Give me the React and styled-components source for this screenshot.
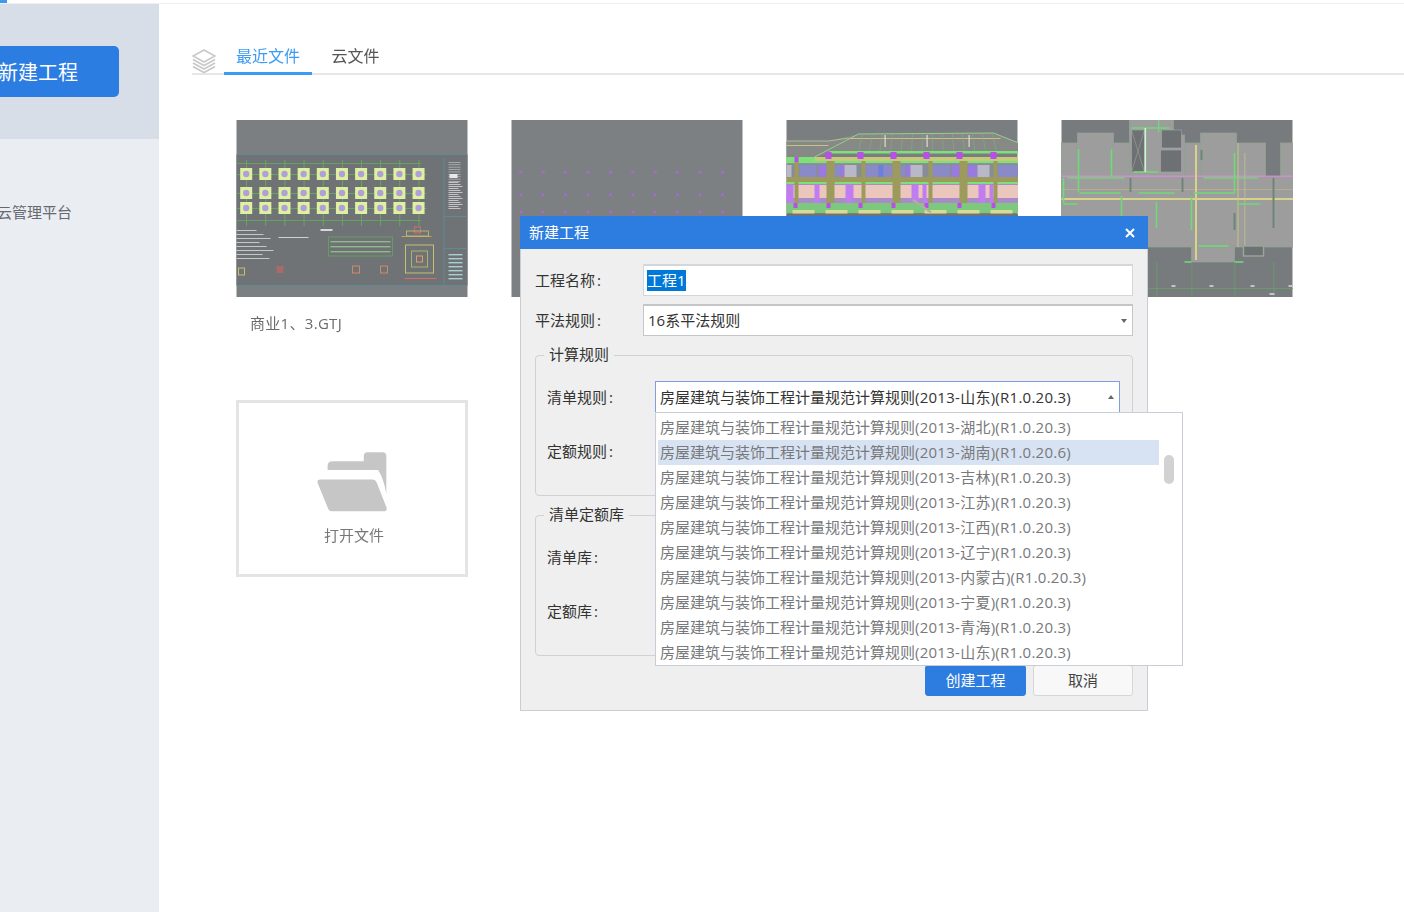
import styled, { createGlobalStyle } from "styled-components";

const FONT = `"Open Sans", "Noto Sans CJK SC", sans-serif`;

const GlobalStyle = createGlobalStyle`
    html, body {
        margin: 0;
        padding: 0;
        height: 100%;
        overflow: hidden;
        background: #ffffff;
        font-family: ${FONT};
    }
    * { box-sizing: border-box; }
`;

const Page = styled.div`
    position: relative;
    width: 1404px;
    height: 912px;
    display: flex;
    flex-direction: column;
    overflow: hidden;
    filter: blur(0.3px);
`;

const TopStrip = styled.div`
    height: 4px;
    flex: none;
    background: #ffffff;
    border-bottom: 1px solid #efefef;
    &::before {
        content: "";
        display: block;
        width: 7px;
        height: 3px;
        background: #3f97f0;
    }
`;

const Body = styled.div`
    flex: 1;
    display: flex;
    min-height: 0;
`;

const Sidebar = styled.aside`
    width: 159px;
    flex: none;
    background: #eaedf2;
    overflow: hidden;
`;

const SideHead = styled.div`
    height: 135px;
    background: #d8dee8;
    padding-top: 42px;
`;

const NewButton = styled.div`
    width: 159px;
    height: 51px;
    margin-left: -40px;
    padding-left: 38px;
    display: flex;
    align-items: center;
    background: #2b7de1;
    border-radius: 5px;
    color: #ffffff;
    font-size: 20px;
`;

const SideLink = styled.div`
    margin: 64px 0 0 -3px;
    font-size: 15px;
    line-height: 18px;
    color: #666a70;
`;

const Main = styled.main`
    flex: 1;
    padding: 40px 0 0 33px;
`;

const TabBar = styled.div`
    display: flex;
    align-items: flex-end;
    height: 31px;
    border-bottom: 2px solid #e6e6e6;
`;

const LayersIcon = styled.svg`
    width: 24px;
    height: 26px;
    margin-bottom: -1px;
    margin-right: 8px;
    flex: none;
`;

const Tab = styled.div`
    width: ${props => props.$width};
    height: 31px;
    margin-bottom: -2px;
    text-align: center;
    font-size: 16px;
    line-height: 24px;
    color: ${props => props.$active ? "#3b9bf5" : "#555555"};
    border-bottom: 3px solid ${props => props.$active ? "#3b9bf5" : "transparent"};
`;

const FileGrid = styled.div`
    display: grid;
    grid-template-columns: repeat(4, 231px);
    column-gap: 44px;
    padding: 45px 0 0 44px;
`;

const FileCard = styled.div`
    height: 280px;
`;

const Thumb = styled.svg`
    display: block;
    width: 232px;
    height: 177px;
`;

const Caption = styled.div`
    margin: 16px 0 0 14px;
    font-size: 15px;
    line-height: 20px;
    letter-spacing: 0.3px;
    color: #6b6b6b;
`;

const OpenCard = styled.div`
    width: 232px;
    height: 177px;
    border: 3px solid #e4e4e4;
    display: flex;
    flex-direction: column;
    align-items: center;
    padding: 47px 0 0 4px;
    font-size: 15px;
    line-height: 20px;
    color: #777777;
`;

const FolderIcon = styled.svg`
    width: 73px;
    height: 63px;
    margin: 0 4px 12px 0;
`;

const Dialog = styled.section`
    position: absolute;
    left: 520px;
    top: 216px;
    width: 628px;
    height: 495px;
    background: #efefef;
    border: 1px solid #c9ced6;
    border-top: none;
    color: #333333;
    font-size: 15px;
`;

const DialogHead = styled.header`
    height: 33px;
    margin: 0 -1px;
    padding: 0 13px 0 9px;
    display: flex;
    align-items: center;
    justify-content: space-between;
    background: #2d7de0;
    color: #ffffff;
    font-size: 15px;
`;

const DialogTitle = styled.span`
    padding-bottom: 2px;
`;

const CloseIcon = styled.svg`
    width: 10px;
    height: 10px;
`;

const DialogBody = styled.div`
    padding: 15px 14px 0;
`;

const Row = styled.div`
    display: flex;
    align-items: center;
    height: 32px;
    margin-bottom: ${props => props.$gap || "8px"};
`;

const Label = styled.label`
    width: 108px;
    flex: none;
    padding-bottom: 2px;
`;

const Colon = styled.span`
    margin-left: 2px;
`;

const TextField = styled.div`
    flex: 1;
    height: 32px;
    padding: 0 0 1px 3px;
    display: flex;
    align-items: center;
    background: #ffffff;
    border: 1px solid #d4d6d9;
    border-top-width: 2px;
`;

const Selected = styled.span`
    background: #0078d7;
    color: #ffffff;
    line-height: 21px;
`;

const Combo = styled.div`
    position: relative;
    flex: 1;
    height: 32px;
    padding: 0 5px 2px 4px;
    display: flex;
    align-items: center;
    justify-content: space-between;
    background: #ffffff;
    white-space: nowrap;
    border: 1px solid ${props => props.$open ? "#7f9fe0" : "#c4c6c9"};
    border-top-width: ${props => props.$open ? "1px" : "2px"};
`;

const Caret = styled.span`
    flex: none;
    width: 0;
    height: 0;
    margin-top: 2px;
    border-left: 3.5px solid transparent;
    border-right: 3.5px solid transparent;
    border-top: ${props => props.$up ? "0" : "4px solid #666666"};
    border-bottom: ${props => props.$up ? "4px solid #666666" : "0"};
`;

const Version = styled.span`
    letter-spacing: 0.26px;
`;

const Group = styled.div`
    position: relative;
    height: 141px;
    margin-top: ${props => props.$top};
    padding: 25px 12px 0 11px;
    border: 1px solid #cfd1d4;
    border-radius: 4px;
`;

const GroupTitle = styled.div`
    position: absolute;
    left: 8px;
    top: -12px;
    padding: 0 5px;
    background: #efefef;
    line-height: 20px;
`;

const Dropdown = styled.ul`
    position: absolute;
    left: -1px;
    top: 30px;
    z-index: 2;
    width: 528px;
    height: 254px;
    margin: 0;
    padding: 2px 0 0 2px;
    list-style: none;
    background: #ffffff;
    border: 1px solid #c9ced6;
    color: #77797c;
`;

const Option = styled.li`
    width: 501px;
    height: 25px;
    padding-left: 2px;
    line-height: 25px;
    background: ${props => props.$active ? "#d7e2f2" : "transparent"};
`;

const ScrollThumb = styled.div`
    position: absolute;
    left: 508px;
    top: 42px;
    width: 10px;
    height: 29px;
    border-radius: 5px;
    background: #d2d2d2;
`;

const Actions = styled.div`
    display: flex;
    justify-content: flex-end;
    gap: 7px;
    margin-top: 9px;
`;

const ActionButton = styled.button`
    width: ${props => props.$primary ? "101px" : "100px"};
    height: 31px;
    padding: 0 0 2px;
    font: inherit;
    border-radius: 3px;
    color: ${props => props.$primary ? "#ffffff" : "#444444"};
    background: ${props => props.$primary ? "#2d7de0" : "#f8f8f8"};
    border: 1px solid ${props => props.$primary ? "#2d7de0" : "#d4d6d9"};
`;

const PREFIX = "房屋建筑与装饰工程计量规范计算规则";

const OPTIONS = [
    "(2013-湖北)(R1.0.20.3)",
    "(2013-湖南)(R1.0.20.6)",
    "(2013-吉林)(R1.0.20.3)",
    "(2013-江苏)(R1.0.20.3)",
    "(2013-江西)(R1.0.20.3)",
    "(2013-辽宁)(R1.0.20.3)",
    "(2013-内蒙古)(R1.0.20.3)",
    "(2013-宁夏)(R1.0.20.3)",
    "(2013-青海)(R1.0.20.3)",
    "(2013-山东)(R1.0.20.3)",
];

const range = (n) => Array.from({ length: n }, (_, i) => i);

function PlanThumb() {
    const cols = range(10).map((i) => 9.7 + i * 19.15);
    const rows = [54, 73, 88];
    return (
        <Thumb viewBox="0 0 231 177">
            <rect width="231" height="177" fill="#7b7f82" />
            <rect x="0" y="35" width="231" height="130" fill="#6f7376" />
            <rect x="0" y="34" width="231" height="1" fill="#5f8c94" />
            <rect x="0" y="165" width="231" height="1" fill="#5f8c94" />
            <rect x="207" y="38" width="1" height="127" fill="#5f8c94" />
            <rect x="0" y="43" width="185" height="1" fill="#62a35e" />
            <rect x="0" y="100" width="185" height="1" fill="#62a35e" />
            {cols.map((x) => <rect key={x} x={x} y="40" width="0.8" height="66" fill="#66b060" />)}
            {rows.map((y) => <rect key={y} x="0" y={y} width="190" height="0.8" fill="#66b060" />)}
            {rows.map((y) => cols.map((x) => (
                <g key={`${x}-${y}`}>
                    <rect x={x - 6} y={y - 6} width="12" height="12" fill="#dff0a0" />
                    <circle cx={x} cy={y} r="3.2" fill="#b0a0d8" />
                </g>
            )))}
            {range(9).map((i) => <rect key={i} x="212" y={42 + i * 2.4} width="12" height="0.7" fill="#b9bdbf" />)}
            <rect x="213" y="54" width="8" height="4" fill="#e8e8e8" />
            {range(14).map((i) => <rect key={i} x="212" y={62 + i * 2} width={10 + (i % 3) * 2} height="0.8" fill="#d8d8d8" />)}
            <rect x="208" y="96" width="23" height="1" fill="#5f8c94" />
            <rect x="208" y="128" width="23" height="1" fill="#5f8c94" />
            {range(7).map((i) => <rect key={i} x="212" y={134 + i * 4} width="14" height="1.4" fill="#a9cfd0" />)}
            {range(8).map((i) => <rect key={i} x="0" y={110 + i * 4} width={20 + (i * 7) % 18} height="0.9" fill="#cfd2d3" />)}
            <rect x="42" y="117" width="30" height="1" fill="#cfd2d3" />
            <rect x="84" y="109" width="12" height="2" fill="#d8d8d8" />
            <rect x="92" y="117" width="64" height="19" fill="none" stroke="#67a660" strokeWidth="0.8" />
            {range(3).map((i) => <rect key={i} x="94" y={121 + i * 5} width="60" height="1.4" fill="#8fb98b" />)}
            <rect x="165" y="116" width="30" height="1" fill="#c8a05a" />
            <rect x="178" y="107" width="6" height="6" fill="none" stroke="#d66b6b" strokeWidth="1" />
            <rect x="170" y="111" width="22" height="5" fill="none" stroke="#c8c070" strokeWidth="0.8" />
            <rect x="169" y="125" width="28" height="28" fill="none" stroke="#c8c070" strokeWidth="1" />
            <rect x="175" y="131" width="16" height="16" fill="none" stroke="#a9b56a" strokeWidth="1" />
            <rect x="180" y="136" width="6" height="6" fill="none" stroke="#e29a6b" strokeWidth="1" />
            <rect x="40" y="146" width="7" height="7" fill="#a86a6a" />
            <rect x="116" y="146" width="7" height="7" fill="none" stroke="#d08a6a" strokeWidth="1" />
            <rect x="144" y="146" width="7" height="7" fill="none" stroke="#d08a6a" strokeWidth="1" />
            <rect x="2" y="148" width="6" height="7" fill="none" stroke="#c8c070" strokeWidth="1" />
            <rect x="168" y="158" width="32" height="1" fill="#d66b6b" />
        </Thumb>
    );
}

function DotsThumb() {
    return (
        <Thumb viewBox="0 0 231 177">
            <rect width="231" height="177" fill="#7c8083" />
            {[52.3, 74.7, 92].map((y) => range(11).map((i) => (
                <circle key={`${y}-${i}`} cx={9.3 + i * 22.4} cy={y} r="1.5" fill="#a868d8" />
            )))}
        </Thumb>
    );
}

const UPPER_WINDOWS = [
    [0, 5, "#b8b8c8"], [13, 17, "#8a8ac8"], [32, 8, "#9a7ae0"], [48, 6, "#8a8ac8"], [54, 4, "#9a7ae0"],
    [58, 12, "#b8b8c8"], [78, 14, "#8a8ac8"], [92, 5, "#6a7fe0"], [97, 9, "#8a8ac8"], [113, 6, "#8a8ac8"],
    [120, 4, "#9a7ae0"], [124, 12, "#b8b8c8"], [145, 18, "#8a8ac8"], [165, 8, "#9a7ae0"], [181, 10, "#9a7ae0"],
    [191, 12, "#b8b8c8"], [211, 21, "#8a8ac8"],
];

const LOWER_STRIPS = [[0, 7], [28, 5], [59, 8], [125, 7], [136, 4], [192, 7], [203, 4]];

const WIDE_COLUMNS = [40, 106, 173];
const THIN_COLUMNS = [8, 75, 142, 207];

function BuildingThumb() {
    return (
        <Thumb viewBox="0 0 231 177">
            <rect width="231" height="177" fill="#7a7e81" />
            <path d="M0 21 H42 L72 14 L207 13 L232 23 V33 H43 L28 38 H0Z" fill="#868985" />
            <path d="M28 37 L72 14 L207 13 L232 23" fill="none" stroke="#93d090" strokeWidth="1" />
            <path d="M0 21 H42 L62 18" fill="none" stroke="#b8d090" strokeWidth="0.8" />
            <rect x="62" y="18" width="152" height="1" fill="#c8c088" />
            <rect x="0" y="25" width="42" height="1" fill="#c8c088" />
            {[98, 140, 182].map((x) => <rect key={x} x={x} y="15" width="1.2" height="12" fill="#dcdcdc" />)}
            {range(14).map((i) => <path key={i} d={`M${76 + i * 10} 14 L${72 + i * 10.6} 32`} stroke="#7fb07f" strokeWidth="0.6" />)}
            <rect x="43" y="31" width="189" height="2.5" fill="#7de07a" />
            <rect x="0" y="37" width="232" height="4" fill="#c8c87a" />
            <rect x="0" y="37" width="28" height="4" fill="#7de07a" />
            <rect x="0" y="41" width="232" height="2.5" fill="#7de07a" />
            <rect x="0" y="43.5" width="232" height="14" fill="#888c94" />
            {UPPER_WINDOWS.map(([x, w, c]) => <rect key={x} x={x} y="45" width={w} height="12" fill={c} />)}
            <rect x="0" y="57" width="232" height="5" fill="#9c9a5c" />
            <rect x="0" y="62" width="232" height="2" fill="#7de07a" />
            <rect x="0" y="64" width="232" height="19" fill="#a98bc8" />
            <rect x="0" y="65" width="232" height="13" fill="#ebc6bc" />
            {LOWER_STRIPS.map(([x, w]) => <rect key={x} x={x} y="65" width={w} height="18" fill="#c07cf0" />)}
            {WIDE_COLUMNS.map((x) => <rect key={x} x={x} y="41" width="8" height="43" fill="#9c9a5c" />)}
            {THIN_COLUMNS.map((x) => <rect key={x} x={x} y="41" width="4" height="43" fill="#9c9a5c" />)}
            {[42, 74, 107, 140, 173, 207].map((x) => <rect key={x} x={x - 3} y="32" width="6" height="7" fill="#b84fe8" />)}
            <rect x="8" y="37" width="4" height="5" fill="#b84fe8" />
            <rect x="0" y="83" width="232" height="10" fill="#7cc87c" />
            {range(7).map((i) => <rect key={i} x={6 + i * 33} y="90" width="22" height="3.5" fill="#d6dc96" />)}
            {[9, 42, 74, 107, 140, 173, 207].map((x) => <rect key={x} x={x - 2} y="83" width="4" height="5" fill="#b84fe8" />)}
            <rect x="127" y="79" width="22" height="2" transform="rotate(35 127 79)" fill="#b0b0a0" />
            <rect x="0" y="94" width="232" height="83" fill="#6f7376" />
        </Thumb>
    );
}

const STEEL_BLOCKS = [
    [0, 23, 16, 34], [16, 13, 36, 44], [52, 23, 16, 34], [68, 0, 44, 57], [112, 15, 11, 42],
    [123, 23, 16, 34], [139, 13, 36, 44], [175, 23, 29, 34], [219, 23, 13, 34],
    [0, 57, 232, 70], [130, 127, 43, 15],
];

const STEEL_DARK = [[70, 10, 13, 42], [99, 30, 21, 22], [100, 10, 20, 18]];

// x1, y1, x2, y2 for each bright green beam
const STEEL_BEAMS = [
    [17, 29, 17, 72], [50, 29, 50, 57], [173, 33, 173, 73], [2, 58, 2, 83], [60, 76, 60, 97],
    [95, 82, 95, 108], [130, 77, 130, 110], [6, 58, 63, 58], [18, 73, 59, 73], [77, 73, 113, 73],
    [132, 73, 173, 73], [2, 84, 16, 84], [175, 84, 199, 84], [72, 52, 97, 52], [70, 8, 108, 8],
    [142, 58, 197, 58], [137, 126, 167, 126], [123, 142, 130, 142], [173, 142, 182, 142],
];

const STEEL_SHADOWS = [[69, 58, 69, 72], [121, 58, 121, 72], [212, 58, 212, 108], [173, 93, 173, 110], [140, 30, 140, 40]];

function SteelThumb() {
    return (
        <Thumb viewBox="0 0 231 177">
            <rect width="231" height="177" fill="#777b7e" />
            {STEEL_BLOCKS.map(([x, y, w, h]) => (
                <rect key={`${x}-${y}`} x={x} y={y} width={w} height={h} fill="#9d9d9d" stroke="#8fa38f" strokeWidth="0.8" />
            ))}
            {STEEL_DARK.map(([x, y, w, h]) => (
                <rect key={x} x={x} y={y} width={w} height={h} fill="#6d7173" stroke="#a8a8a8" strokeWidth="0.6" />
            ))}
            <path d="M70 10 L83 52 M83 10 L70 52" stroke="#a0a0a0" strokeWidth="0.6" />
            <rect x="0" y="55.6" width="232" height="1.2" fill="#e08be0" />
            <rect x="0" y="69" width="232" height="0.8" fill="#b8b48a" />
            <rect x="0" y="78" width="232" height="2" fill="#d8d28a" />
            <rect x="133.5" y="25" width="2" height="115" fill="#d8d28a" />
            <rect x="176" y="23" width="1" height="104" fill="#c8c48a" />
            <rect x="183" y="33" width="0.8" height="94" fill="#c8c48a" />
            {STEEL_SHADOWS.map(([x1, y1, x2, y2]) => (
                <line key={`${x1}-${y1}`} x1={x1} y1={y1} x2={x2} y2={y2} stroke="#6f8478" strokeWidth="2" />
            ))}
            {STEEL_BEAMS.map(([x1, y1, x2, y2]) => (
                <line key={`${x1}-${y1}`} x1={x1} y1={y1} x2={x2} y2={y2} stroke="#72d878" strokeWidth="1.6" />
            ))}
            <rect x="83" y="8" width="1.6" height="44" fill="#c8f5cc" />
            <rect x="96.5" y="0" width="1.4" height="12" fill="#72d878" />
            <rect x="182" y="126" width="20" height="10" fill="#6d7173" stroke="#98a898" strokeWidth="1.4" />
            {[95, 130, 173, 212].map((x) => <rect key={x} x={x} y="142" width="0.8" height="35" fill="#68a068" />)}
            <rect x="87" y="168" width="145" height="0.8" fill="#68a068" />
            {[112, 150, 191, 229].map((x) => <rect key={x} x={x - 2} y="165" width="4" height="2" fill="#c4c4c4" />)}
            <rect x="208" y="173" width="5" height="2" fill="#c4c4c4" />
        </Thumb>
    );
}

function App() {
    return (
        <Page>
            <GlobalStyle />
            <TopStrip />
            <Body>
                <Sidebar>
                    <SideHead>
                        <NewButton>新建工程</NewButton>
                    </SideHead>
                    <SideLink>云管理平台</SideLink>
                </Sidebar>
                <Main>
                    <TabBar>
                        <LayersIcon viewBox="0 0 24 26" fill="none" stroke="#c8c8c8" strokeWidth="1.6">
                            <path d="M12 2 L23 8 L12 14 L1 8Z" />
                            <path d="M1 11.5 L12 17.5 L23 11.5" />
                            <path d="M1 15 L12 21 L23 15" />
                            <path d="M1 18.5 L12 24.5 L23 18.5" />
                        </LayersIcon>
                        <Tab $active $width="88px">最近文件</Tab>
                        <Tab $width="87px">云文件</Tab>
                    </TabBar>
                    <FileGrid>
                        <FileCard>
                            <PlanThumb />
                            <Caption>商业1、3.GTJ</Caption>
                        </FileCard>
                        <FileCard><DotsThumb /></FileCard>
                        <FileCard><BuildingThumb /></FileCard>
                        <FileCard><SteelThumb /></FileCard>
                        <OpenCard>
                            <FolderIcon viewBox="285 180 220 190" fill="#c6c6c6">
                                <path d="M320 240 V228 Q320 214 334 214 H429 V199 Q429 187 441 187 H485 Q497 187 497 199 V312 Q488 262 472 240Z" />
                                <path d="M298 269 H456 Q464 269 468 278 L497 352 Q502 365 488 365 H332 Q324 365 321 356 L290 280 Q287 269 298 269Z" />
                            </FolderIcon>
                            打开文件
                        </OpenCard>
                    </FileGrid>
                </Main>
            </Body>
            <Dialog>
                <DialogHead>
                    <DialogTitle>新建工程</DialogTitle>
                    <CloseIcon viewBox="0 0 10 10" stroke="#ffffff" strokeWidth="2">
                        <path d="M1 1 L9 9 M9 1 L1 9" />
                    </CloseIcon>
                </DialogHead>
                <DialogBody>
                    <Row>
                        <Label>工程名称<Colon>:</Colon></Label>
                        <TextField><Selected>工程1</Selected></TextField>
                    </Row>
                    <Row $gap="0">
                        <Label>平法规则<Colon>:</Colon></Label>
                        <Combo>16系平法规则<Caret /></Combo>
                    </Row>
                    <Group $top="19px">
                        <GroupTitle>计算规则</GroupTitle>
                        <Row $gap="22px">
                            <Label>清单规则<Colon>:</Colon></Label>
                            <Combo $open>
                                <span>{PREFIX}<Version>(2013-山东)(R1.0.20.3)</Version></span>
                                <Caret $up />
                                <Dropdown>
                                    {OPTIONS.map((item, i) => (
                                        <Option key={item} $active={i === 1}>{PREFIX}<Version>{item}</Version></Option>
                                    ))}
                                    <ScrollThumb />
                                </Dropdown>
                            </Combo>
                        </Row>
                        <Row $gap="0">
                            <Label>定额规则<Colon>:</Colon></Label>
                            <Combo />
                        </Row>
                    </Group>
                    <Group $top="19px">
                        <GroupTitle>清单定额库</GroupTitle>
                        <Row $gap="22px">
                            <Label>清单库<Colon>:</Colon></Label>
                            <Combo />
                        </Row>
                        <Row $gap="0">
                            <Label>定额库<Colon>:</Colon></Label>
                            <Combo />
                        </Row>
                    </Group>
                    <Actions>
                        <ActionButton $primary>创建工程</ActionButton>
                        <ActionButton>取消</ActionButton>
                    </Actions>
                </DialogBody>
            </Dialog>
        </Page>
    );
}

export default App;
